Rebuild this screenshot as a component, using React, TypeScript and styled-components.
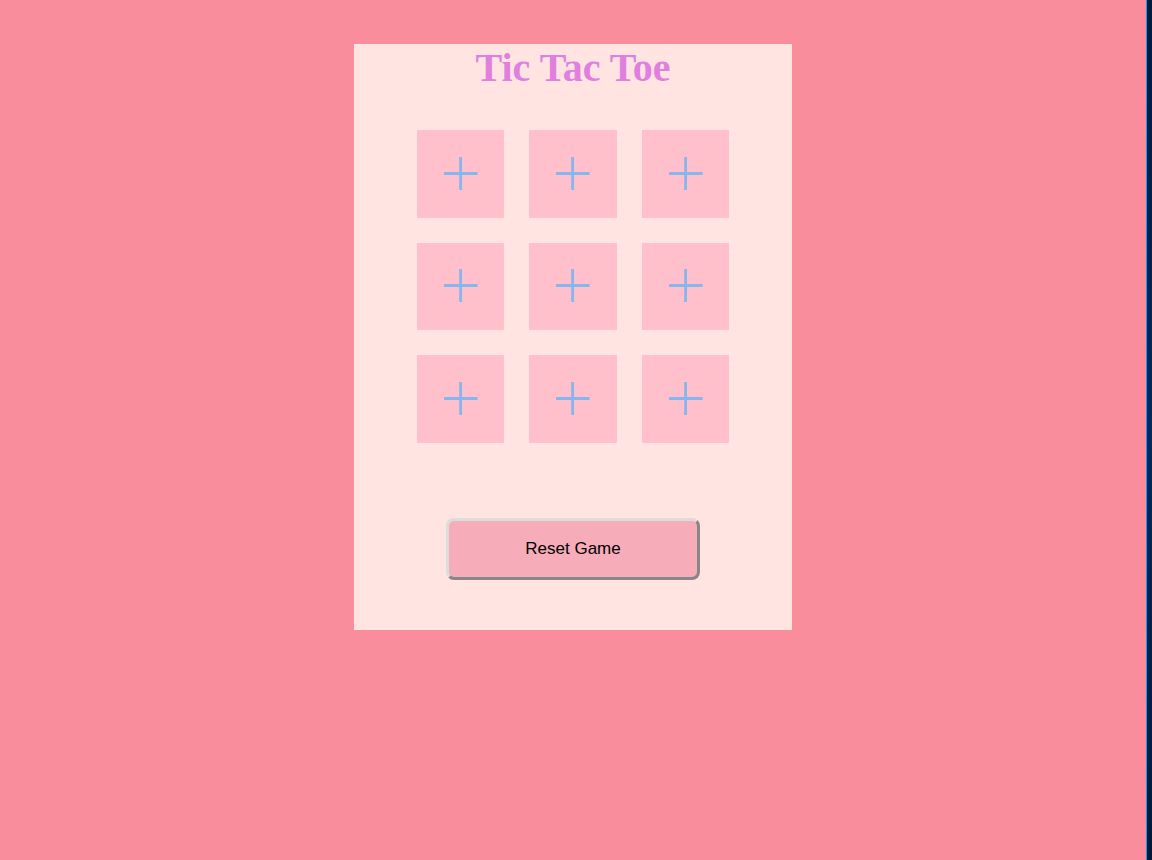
import React, { useState } from "react";
import styled, { createGlobalStyle } from "styled-components";

const GlobalStyle = createGlobalStyle`
  *, *::before, *::after { box-sizing: border-box; }
  body { margin: 0; background: #f98d9c; }
`;

const Page = styled.div`
  display: flex;
  align-items: stretch;
  min-height: 100vh;
`;

const Main = styled.main`
  flex: 1;
  display: flex;
  justify-content: center;
  align-items: flex-start;
  padding: 44px 0;
`;

const Edge = styled.div`
  width: 6px;
  border-left: 1px solid #1e90ff;
  background: linear-gradient(#001a3a, #002a5a 50%, #001a36);
`;

const Card = styled.section`
  display: flex;
  flex-direction: column;
  align-items: center;
  width: 438px;
  max-width: 100%;
  padding-bottom: 50px;
  background: #ffe4e1;
`;

const Title = styled.h1`
  margin: 0 0 38px;
  font: bold 40px/48px "Liberation Serif", "Times New Roman", serif;
  color: #df80df;
`;

const Board = styled.div`
  display: grid;
  grid-template: repeat(3, 1fr) / repeat(3, 1fr);
  gap: 25px;
  width: 312px;
  height: 313px;
`;

const Cell = styled.button`
  display: flex;
  align-items: center;
  justify-content: center;
  padding: 0;
  border: 0;
  background: #ffc0cb;
  color: #85b6ed;
  font: 48px/1 "Liberation Sans", Arial, sans-serif;
  cursor: pointer;
`;

const ResetButton = styled.button`
  width: 254px;
  height: 62px;
  margin-top: 75px;
  padding: 0;
  border: 3px solid;
  border-color: #dcdcdc #878787 #878787 #dcdcdc;
  border-radius: 8px;
  background: #f6acb9;
  color: #000;
  font: 17px/20px "Liberation Sans", Arial, sans-serif;
  cursor: pointer;
`;

const PlusIcon = () => (
  <svg width="35" height="36" viewBox="0 0 35 36" fill="none" stroke="currentColor" strokeWidth="2.8" aria-hidden="true">
    <path d="M1 17.5H34.6M17.6 1V34" />
  </svg>
);

const emptyBoard: string[] = Array(9).fill("");

export default function App() {
  const [marks, setMarks] = useState(emptyBoard);

  const play = (index: number) => {
    if (marks[index]) return;
    const turn = marks.filter(Boolean).length % 2 === 0 ? "X" : "O";
    setMarks(marks.map((mark, i) => (i === index ? turn : mark)));
  };

  return (
    <>
      <GlobalStyle />
      <Page>
        <Main>
          <Card>
            <Title>Tic Tac Toe</Title>
            <Board>
              {marks.map((mark, i) => (
                <Cell key={i} type="button" aria-label={`Square ${i + 1}`} onClick={() => play(i)}>
                  {mark || <PlusIcon />}
                </Cell>
              ))}
            </Board>
            <ResetButton type="button" onClick={() => setMarks(emptyBoard)}>
              Reset Game
            </ResetButton>
          </Card>
        </Main>
        <Edge />
      </Page>
    </>
  );
}
